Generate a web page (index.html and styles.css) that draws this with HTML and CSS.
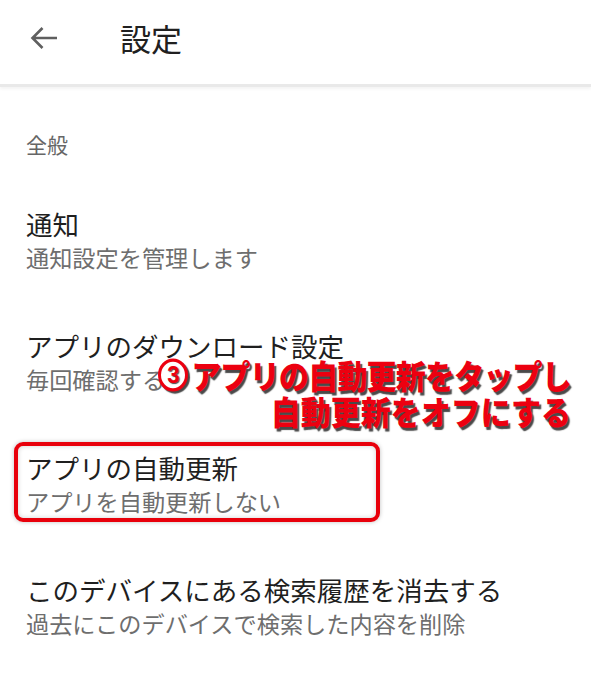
FILE: index.html
```html
<!DOCTYPE html>
<html lang="ja">
<head>
<meta charset="utf-8">
<title>設定</title>
<link rel="stylesheet" href="styles.css">
</head>
<body>
<header class="appbar">
  <svg class="back" width="28" height="24" viewBox="0 0 28 24" aria-hidden="true">
    <path d="M27 12H2.5M12.5 2L2.5 12L12.5 22" fill="none" stroke="#5f5f5f" stroke-width="2.6"/>
  </svg>
  <h1 class="title">設定</h1>
</header>
<main class="content">
  <div class="section-label">全般</div>
  <div class="item">
    <div class="item-title">通知</div>
    <div class="item-sub">通知設定を管理します</div>
  </div>
  <div class="item">
    <div class="item-title">アプリのダウンロード設定</div>
    <div class="item-sub">毎回確認する</div>
    <div class="callout">
      <div class="callout-line"><span class="num">3</span>アプリの自動更新をタップし</div>
      <div class="callout-line second">自動更新をオフにする</div>
    </div>
  </div>
  <div class="item">
    <div class="item-title">アプリの自動更新</div>
    <div class="item-sub">アプリを自動更新しない</div>
    <div class="highlight"></div>
  </div>
  <div class="item">
    <div class="item-title">このデバイスにある検索履歴を消去する</div>
    <div class="item-sub">過去にこのデバイスで検索した内容を削除</div>
  </div>
</main>
</body>
</html>
```

FILE: styles.css
```css
html, body {
  margin: 0;
  padding: 0;
  background: #ffffff;
}
body {
  font-family: "Noto Sans CJK JP", "Noto Sans", sans-serif;
  width: 591px;
  height: 675px;
  overflow: hidden;
}
.appbar {
  height: 76px;
  padding-bottom: 8px;
  display: flex;
  align-items: center;
  padding-left: 30px;
  gap: 62px;
  border-bottom: 3px solid #e9e9e9;
  box-shadow: 0 2px 3px rgba(0,0,0,0.05);
  box-sizing: content-box;
}
.back {
  display: block;
}
.title {
  margin: 0;
  font-size: 31px;
  font-weight: 400;
  color: #202020;
  line-height: 36px;
}
.content {
  display: flex;
  flex-direction: column;
}
.section-label {
  padding: 42px 0 0 26px;
  font-size: 21px;
  line-height: 30px;
  color: #666666;
  margin-bottom: 20px;
}
.item {
  position: relative;
  height: 122px;
  box-sizing: border-box;
  padding: 28px 0 28px 26px;
}
.item-title {
  font-size: 26.5px;
  line-height: 34px;
  color: #1f1f1f;
}
.item-sub {
  font-size: 23.2px;
  line-height: 32px;
  color: #6e6e6e;
}
.highlight {
  position: absolute;
  left: 14px;
  top: 19px;
  width: 366px;
  height: 80px;
  box-sizing: border-box;
  border: 4px solid #e8000b;
  border-radius: 9px;
  box-shadow: 0 0 4px rgba(0,0,0,0.25), inset 0 0 5px rgba(0,0,0,0.18);
}
.callout {
  position: absolute;
  right: 20px;
  top: 56px;
  display: flex;
  flex-direction: column;
  align-items: flex-end;
}
.callout-line {
  display: flex;
  align-items: center;
  font-size: 30px;
  font-weight: 900;
  line-height: 36px;
  color: #ec0010;
  letter-spacing: -0.8px;
  white-space: nowrap;
  transform: scaleY(1.1);
  text-shadow: 2px 2px 1px #4a4a4a, -1px -1px 0 #ffffff, 1px -1px 0 #ffffff, -1px 1px 0 #ffffff;
}
.num {
  display: inline-block;
  width: 24px;
  height: 24px;
  margin-right: 3px;
  border: 3px solid #ec0010;
  border-radius: 50%;
  background: #ffffff;
  font-family: "Liberation Sans", Arial, sans-serif;
  font-size: 22px;
  font-weight: 700;
  line-height: 24px;
  text-align: center;
  letter-spacing: 0;
  box-shadow: 2px 2px 1px #4a4a4a;
  text-shadow: 1px 1px 1px #4a4a4a;
}
.callout-line.second {
  letter-spacing: 0;
  transform-origin: right center;
}
```
